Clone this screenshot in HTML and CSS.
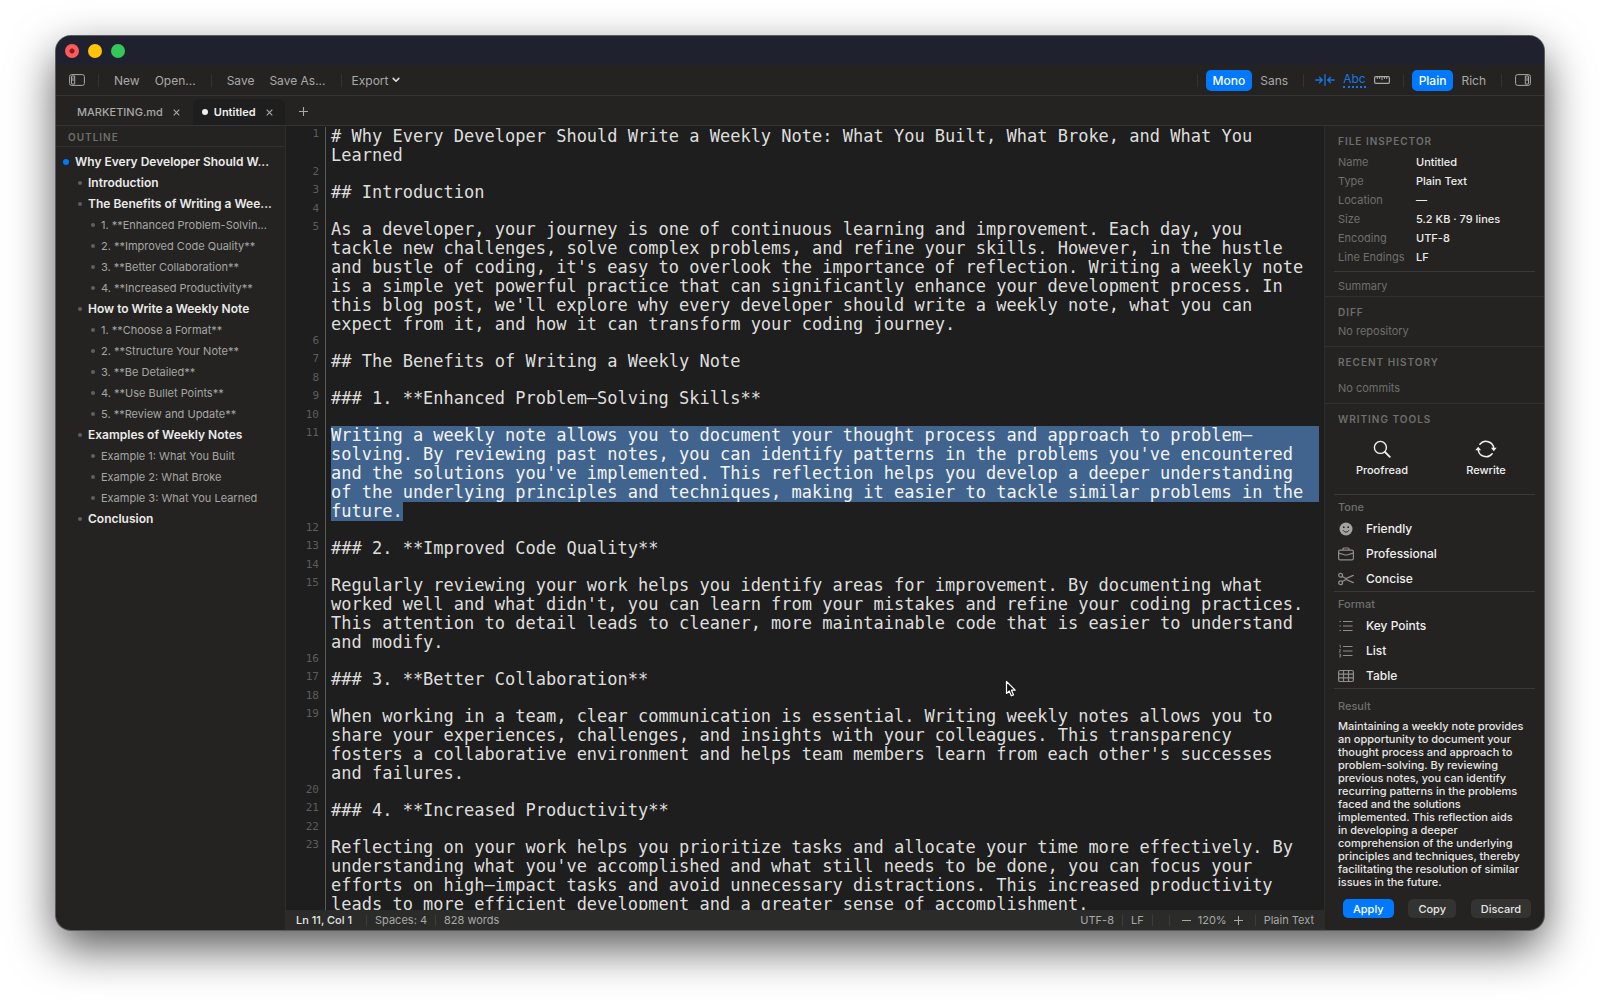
FILE: index.html
```html
<!DOCTYPE html>
<html lang="en">
<head>
<meta charset="utf-8">
<title>Untitled</title>
<link rel="stylesheet" href="styles.css">
</head>
<body>
<div class="window">
  <header class="titlebar">
    <button class="light close" aria-label="Close"></button>
    <button class="light minimize" aria-label="Minimize"></button>
    <button class="light maximize" aria-label="Zoom"></button>
  </header>

  <nav class="toolbar">
    <button class="icon-btn" aria-label="Toggle outline">
      <svg width="16" height="12" viewBox="0 0 16 12" fill="none" stroke="currentColor"><rect x=".6" y=".6" width="14.8" height="10.8" rx="2"/><path d="M5.7 2v8M2.5 2.2v7.600M2.500 2h3.200M2.500 10h3.200M4 3.500v3.500"/></svg>
    </button>
    <span class="sep"></span>
    <button class="tool">New</button>
    <button class="tool">Open...</button>
    <span class="sep"></span>
    <button class="tool">Save</button>
    <button class="tool">Save As...</button>
    <span class="sep"></span>
    <button class="tool export">Export<svg width="8" height="6" viewBox="0 0 8 6" fill="none" stroke="#ddd" stroke-width="1.6" stroke-linecap="round" stroke-linejoin="round"><path d="M1.2 1.4 4 4.2l2.8-2.8"/></svg></button>
    <span class="spacer"></span>
    <span class="sep"></span>
    <div class="segment">
      <button class="seg on">Mono</button>
      <button class="seg">Sans</button>
    </div>
    <span class="sep"></span>
    <div class="toggles">
      <button class="icon-btn blue" aria-label="Wrap lines">
        <svg width="20" height="12" viewBox="0 0 20 12" fill="none" stroke="currentColor" stroke-width="1.3" stroke-linecap="round" stroke-linejoin="round"><path d="M10 .7v10.6M.8 6h6.4M4.5 3.2 7.3 6 4.5 8.8M19.2 6h-6.4M15.5 3.2 12.7 6l2.8 2.8"/></svg>
      </button>
      <button class="abc">Abc</button>
      <button class="icon-btn" aria-label="Ruler">
        <svg width="16" height="8" viewBox="0 0 16 8" fill="none" stroke="currentColor" stroke-width="1.2"><rect x=".6" y=".6" width="14.8" height="6.8" rx="1.3"/><path d="M3.3 1v2M5.6 1v2M8 1v3.2M10.4 1v2M12.7 1v2" stroke-width="1"/></svg>
      </button>
    </div>
    <span class="sep"></span>
    <div class="segment">
      <button class="seg on">Plain</button>
      <button class="seg">Rich</button>
    </div>
    <span class="sep"></span>
    <button class="icon-btn" aria-label="Toggle inspector">
      <svg width="16" height="12" viewBox="0 0 16 12" fill="none" stroke="currentColor"><rect x=".6" y=".6" width="14.8" height="10.8" rx="2"/><path d="M10.3 2v8M13.5 2.2v7.6M10.3 2h3.2M10.3 10h3.2M12 3.5v3.5"/></svg>
    </button>
  </nav>

  <div class="tabs">
    <div class="tab"><span>MARKETING.md</span><button class="x" aria-label="Close MARKETING.md"><svg width="7" height="7" viewBox="0 0 7 7" stroke="currentColor" stroke-width="1.1"><path d="m.7.7 5.6 5.6M6.3.7.7 6.3"/></svg></button></div>
    <div class="tab active"><i class="dirty"></i><span>Untitled</span><button class="x" aria-label="Close Untitled"><svg width="7" height="7" viewBox="0 0 7 7" stroke="currentColor" stroke-width="1.1"><path d="m.7.7 5.6 5.6M6.3.7.7 6.3"/></svg></button></div>
    <button class="add" aria-label="New tab"><svg width="9" height="9" viewBox="0 0 9 9" stroke="currentColor" stroke-width="1.1"><path d="M4.5 0v9M0 4.5h9"/></svg></button>
  </div>

  <div class="body">
    <aside class="outline">
      <h2 class="caption outline-title">OUTLINE</h2>
      <ul class="tree">
        <li class="l1"><span>Why Every Developer Should W...</span></li>
        <li class="l2"><span>Introduction</span></li>
        <li class="l2"><span>The Benefits of Writing a Wee...</span></li>
        <li class="l3"><span>1. **Enhanced Problem-Solvin...</span></li>
        <li class="l3"><span>2. **Improved Code Quality**</span></li>
        <li class="l3"><span>3. **Better Collaboration**</span></li>
        <li class="l3"><span>4. **Increased Productivity**</span></li>
        <li class="l2"><span>How to Write a Weekly Note</span></li>
        <li class="l3"><span>1. **Choose a Format**</span></li>
        <li class="l3"><span>2. **Structure Your Note**</span></li>
        <li class="l3"><span>3. **Be Detailed**</span></li>
        <li class="l3"><span>4. **Use Bullet Points**</span></li>
        <li class="l3"><span>5. **Review and Update**</span></li>
        <li class="l2"><span>Examples of Weekly Notes</span></li>
        <li class="l3"><span>Example 1: What You Built</span></li>
        <li class="l3"><span>Example 2: What Broke</span></li>
        <li class="l3"><span>Example 3: What You Learned</span></li>
        <li class="l2"><span>Conclusion</span></li>
      </ul>
    </aside>

    <main class="editor">
      <div class="code">
        <div class="row"><span class="num">1</span><p># Why Every Developer Should Write a Weekly Note: What You Built, What Broke, and What You Learned</p></div>
        <div class="row blank"><span class="num">2</span><p></p></div>
        <div class="row"><span class="num">3</span><p>## Introduction</p></div>
        <div class="row blank"><span class="num">4</span><p></p></div>
        <div class="row"><span class="num">5</span><p>As a developer, your journey is one of continuous learning and improvement. Each day, you tackle new challenges, solve complex problems, and refine your skills. However, in the hustle and bustle of coding, it's easy to overlook the importance of reflection. Writing a weekly note is a simple yet powerful practice that can significantly enhance your development process. In this blog post, we'll explore why every developer should write a weekly note, what you can expect from it, and how it can transform your coding journey.</p></div>
        <div class="row blank"><span class="num">6</span><p></p></div>
        <div class="row"><span class="num">7</span><p>## The Benefits of Writing a Weekly Note</p></div>
        <div class="row blank"><span class="num">8</span><p></p></div>
        <div class="row"><span class="num">9</span><p>### 1. **Enhanced Problem–Solving Skills**</p></div>
        <div class="row blank"><span class="num">10</span><p></p></div>
        <div class="row selected"><span class="num">11</span><p><mark class="full">Writing a weekly note allows you to document your thought process and approach to problem–solving. By reviewing past notes, you can identify patterns in the problems you've encountered and the solutions you've implemented. This reflection helps you develop a deeper understanding of the underlying principles and techniques, making it easier to tackle similar problems in the</mark> <mark>future.</mark></p></div>
        <div class="row blank"><span class="num">12</span><p></p></div>
        <div class="row"><span class="num">13</span><p>### 2. **Improved Code Quality**</p></div>
        <div class="row blank"><span class="num">14</span><p></p></div>
        <div class="row"><span class="num">15</span><p>Regularly reviewing your work helps you identify areas for improvement. By documenting what worked well and what didn't, you can learn from your mistakes and refine your coding practices. This attention to detail leads to cleaner, more maintainable code that is easier to understand and modify.</p></div>
        <div class="row blank"><span class="num">16</span><p></p></div>
        <div class="row"><span class="num">17</span><p>### 3. **Better Collaboration**</p></div>
        <div class="row blank"><span class="num">18</span><p></p></div>
        <div class="row"><span class="num">19</span><p>When working in a team, clear communication is essential. Writing weekly notes allows you to share your experiences, challenges, and insights with your colleagues. This transparency fosters a collaborative environment and helps team members learn from each other's successes and failures.</p></div>
        <div class="row blank"><span class="num">20</span><p></p></div>
        <div class="row"><span class="num">21</span><p>### 4. **Increased Productivity**</p></div>
        <div class="row blank"><span class="num">22</span><p></p></div>
        <div class="row"><span class="num">23</span><p>Reflecting on your work helps you prioritize tasks and allocate your time more effectively. By understanding what you've accomplished and what still needs to be done, you can focus your efforts on high–impact tasks and avoid unnecessary distractions. This increased productivity leads to more efficient development and a greater sense of accomplishment.</p></div>
      </div>
      <footer class="status">
        <span class="pos">Ln 11, Col 1</span><i class="bar"></i><span>Spaces: 4</span><i class="bar"></i><span>828 words</span>
        <span class="spacer"></span>
        <span>UTF-8</span><i class="bar"></i><span>LF</span><i class="bar"></i><i class="bar"></i>
        <div class="zoom">
          <button aria-label="Zoom out"><svg width="9" height="9" viewBox="0 0 9 9" stroke="currentColor"><path d="M0 4.5h9"/></svg></button>
          <span>120%</span>
          <button aria-label="Zoom in"><svg width="9" height="9" viewBox="0 0 9 9" stroke="currentColor"><path d="M0 4.5h9M4.5 0v9"/></svg></button>
        </div>
        <i class="bar"></i><span>Plain Text</span>
      </footer>
    </main>

    <aside class="inspector">
      <section class="file">
        <h2 class="caption">FILE INSPECTOR</h2>
        <dl>
          <dt>Name</dt><dd>Untitled</dd>
          <dt>Type</dt><dd>Plain Text</dd>
          <dt>Location</dt><dd>—</dd>
          <dt>Size</dt><dd>5.2 KB · 79 lines</dd>
          <dt>Encoding</dt><dd>UTF-8</dd>
          <dt>Line Endings</dt><dd>LF</dd>
        </dl>
      </section>
      <hr>
      <section class="summary"><p class="dim">Summary</p></section>
      <section class="diff">
        <h2 class="caption">DIFF</h2>
        <p class="dim">No repository</p>
      </section>
      <section class="history">
        <h2 class="caption">RECENT HISTORY</h2>
        <p class="dim">No commits</p>
      </section>
      <section class="writing">
        <h2 class="caption">WRITING TOOLS</h2>
        <div class="big">
          <button><svg width="18" height="18" viewBox="0 0 18 18" fill="none" stroke="currentColor" stroke-width="1.4" stroke-linecap="round"><circle cx="7.4" cy="7.4" r="6"/><path d="m12 12 4.8 4.8" stroke-width="1.8"/></svg>Proofread</button>
          <button><svg width="22" height="18" viewBox="0 0 22 18" fill="none" stroke="currentColor" stroke-width="1.5" stroke-linecap="round"><path d="M4.900 4.300a7.800 7.800 0 0 1 13.900 4.200M17.100 13.700A7.800 7.800 0 0 1 3.200 9.500"/><path d="M.3 10.300 3.200 6.800l2.900 3.500zM15.900 7.700l2.900 3.500 2.900-3.500z" fill="currentColor" stroke="none"/></svg>Rewrite</button>
        </div>
      </section>
      <hr>
      <section class="list">
        <h3>Tone</h3>
        <button><svg width="16" height="14" viewBox="0 0 16 14"><circle cx="8" cy="7" r="6.5" fill="#a3a3a2"/><circle cx="5.8" cy="5.2" r=".9" fill="#242321"/><circle cx="10.2" cy="5.2" r=".9" fill="#242321"/><path d="M5 8.2q3 4 6 0" fill="none" stroke="#242321"/></svg>Friendly</button>
        <button><svg width="16" height="14" viewBox="0 0 16 14" fill="none" stroke="currentColor" stroke-width="1.2"><rect x=".6" y="3.2" width="14.8" height="9.6" rx="1.6"/><path d="M5 3V2a1 1 0 0 1 1-1h4a1 1 0 0 1 1 1v1M.8 6.2 7 8h2l6.2-1.8"/></svg>Professional</button>
        <button><svg width="16" height="14" viewBox="0 0 16 14" fill="none" stroke="currentColor" stroke-width="1.3" stroke-linecap="round"><circle cx="2.6" cy="3.3" r="1.900"/><circle cx="2.6" cy="10.7" r="1.900"/><path d="M4.3 4.5 8 6.6l7.3-3.2M4.3 9.5 8 7.4l7.3 3.2"/></svg>Concise</button>
      </section>
      <hr>
      <section class="list">
        <h3>Format</h3>
        <button><svg width="16" height="14" viewBox="0 0 16 14" fill="none" stroke="currentColor"><path d="M5 2.5h9.500M5 7h9.500M5 11.500h9.500M1.500 2.500h1.400M1.500 7h1.400M1.500 11.500h1.400" stroke-width="1.200"/></svg>Key Points</button>
        <button><svg width="16" height="14" viewBox="0 0 16 14" fill="none" stroke="currentColor"><path d="M5 2.500h9.500M5 7h9.500M5 11.500h9.500" stroke-width="1.200"/><path d="M1.500 1.200h.8v2.600M1.200 5.700h1.400l-1.400 2.400h1.600M1.200 10.200h1.500v2.800H1.200M1.500 11.600h1.200" stroke-width=".8"/></svg>List</button>
        <button><svg width="16" height="14" viewBox="0 0 16 14" fill="none" stroke="currentColor" stroke-width="1.200"><rect x=".6" y="1.500" width="14.800" height="11" rx="1.600"/><path d="M.6 5.200h14.800M.6 8.800h14.800M5.500 1.500v11M10.500 1.500v11"/></svg>Table</button>
      </section>
      <hr>
      <section class="result">
        <h3>Result</h3>
        <p>Maintaining a weekly note provides an opportunity to document your thought process and approach to problem-solving. By reviewing previous notes, you can identify recurring patterns in the problems faced and the solutions implemented. This reflection aids in&nbsp;developing a deeper comprehension of the underlying principles and techniques, thereby facilitating the resolution of similar issues in the future.</p>
        <div class="actions">
          <button class="primary">Apply</button>
          <button>Copy</button>
          <button>Discard</button>
        </div>
      </section>
    </aside>
  </div>
</div>
<svg class="cursor" width="12" height="18" viewBox="0 0 12 18"><path d="M1.500 1.500v12l2.800-2.500 2 4.800 2.200-.9-2-4.700h3.700z" fill="#111" stroke="#fff" stroke-width="1.200" stroke-linejoin="round"/></svg>
</body>
</html>
```
FILE: styles.css
```css
* { box-sizing: border-box; }

body {
  margin: 0;
  padding: 36px 56px 70px;
  min-height: 100vh;
  background: #fff;
  font-family: Inter, "Liberation Sans", sans-serif;
  font-size: 12px;
  color: #e6e6e5;
  overflow: hidden;
}

h2, h3, p, ul, dl, dd { margin: 0; padding: 0; font-size: 11px; }
button { font: inherit; color: inherit; background: none; border: 0; padding: 0; margin: 0; }
svg { display: block; flex: none; }

.window {
  height: calc(100vh - 106px);
  display: flex;
  flex-direction: column;
  background: #242321;
  border-radius: 15px;
  overflow: hidden;
  box-shadow: 0 0 0 1px #5a5c5e, 0 18px 46px rgba(0, 0, 0, 0.66);
}

/* title bar */
.titlebar {
  flex: none;
  height: 29px;
  padding-left: 9px;
  display: flex;
  align-items: center;
  gap: 9px;
  background: #1f222e;
}
.light { width: 14px; height: 14px; border-radius: 50%; }
.close { background: radial-gradient(circle, #8c1a1c 0 2px, #fc5b5d 3px); }
.minimize { background: #fdc40a; }
.maximize { background: #34c759; }

/* toolbar */
.toolbar {
  flex: none;
  height: 31px;
  padding: 0 13px;
  display: flex;
  align-items: center;
  border-bottom: 1px solid #343432;
  color: #a9a9a8;
}
.sep { width: 1px; height: 13px; background: #323230; margin: 0 13px; }
.tool { margin: 0 2px; }
.tool + .tool { margin-left: 13px; }
.export { display: flex; align-items: center; gap: 4px; margin-left: -3px; }
.spacer { flex: 1; }
.segment { display: flex; gap: 1px; margin: 0 -5px; }
.seg { height: 21px; padding: 0 7px; border-radius: 5px; }
.seg.on { background: #0079ff; color: #fff; font-weight: 500; }
.toggles { display: flex; align-items: center; gap: 8px; margin-left: -2px; }
.blue { color: #1677e6; }
.abc { color: #1677e6; line-height: 14px; border-bottom: 2px dotted #1677e6; }

/* tabs */
.tabs {
  flex: none;
  height: 30px;
  display: flex;
  align-items: stretch;
  padding: 3px 0 0 8px;
  border-bottom: 1px solid #343432;
  font-size: 11px;
  font-weight: 500;
  color: #a9a9a8;
}
.tab { display: flex; align-items: center; padding: 0 13px; border-radius: 6px 6px 0 0; }
.tab.active { background: #1e1e1e; color: #f0f0f0; font-weight: 600; padding: 0 12px 0 9px; }
.tab .x { color: #a9a9a8; margin-left: 10px; }
.dirty { width: 6px; height: 6px; border-radius: 50%; background: #f0f0f0; margin-right: 6px; }
.add { margin-left: 14px; padding-bottom: 2px; }

/* columns */
.body {
  flex: 1;
  min-height: 0;
  display: grid;
  grid-template-columns: 230px minmax(0, 1fr) 220px;
  grid-template-rows: minmax(0, 1fr);
}

.caption { font-size: 10px; font-weight: 600; letter-spacing: 1px; color: #6f6f6d; line-height: 14px; }

/* outline */
.outline { border-right: 1px solid #2c2c2a; overflow: hidden; }
.outline-title { padding: 4px 12px 2px; border-bottom: 1px solid #30302e; line-height: 14px; }
.tree { list-style: none; padding: 4px 4px 0 7px; }
.tree li { display: flex; align-items: center; height: 21px; gap: 6px; font-size: 11px; color: #a6a6a5; }
.tree li::before { content: ""; flex: none; width: 4px; height: 4px; border-radius: 50%; background: #60605e; }
.tree span { white-space: nowrap; }
.tree .l1, .tree .l2 { font-size: 12px; font-weight: 600; color: #ebebea; }
.tree .l1::before { width: 6px; height: 6px; background: #0079ff; }
.tree .l2 { padding-left: 15px; }
.tree .l3 { padding-left: 28px; }

/* editor */
.editor { display: flex; flex-direction: column; min-width: 0; background: #1e1e1e; }
.code {
  flex: 1;
  min-height: 0;
  overflow: hidden;
  padding-top: 1px;
  font-family: "DejaVu Sans Mono", "Liberation Mono", monospace;
}
.row { display: grid; grid-template-columns: 40px minmax(0, 1fr); }
.num { font-size: 11px; line-height: 13px; text-align: right; padding-right: 6px; color: #5d5d5c; border-right: 1px solid #5a5a59; }
.row p { font-size: 17px; line-height: 19px; min-height: 19px; max-width: calc(95ch + 12px); padding: 0 5px; color: #dededd; }
.row.blank p { min-height: 18px; }
.row.selected p { max-width: none; }
mark { display: inline-block; background: #40648e; color: #f4f4f4; }
mark.full { display: block; }

/* status bar */
.status {
  flex: none;
  height: 20px;
  padding: 0 10px;
  display: flex;
  align-items: center;
  background: #2b2b2a;
  color: #a9a9a8;
  font-size: 11px;
}
.pos { color: #e6e6e5; font-weight: 500; padding-right: 6px; }
.bar { width: 1px; height: 11px; background: #3c3c3b; margin: 0 8px; }
.zoom { display: flex; align-items: center; gap: 7px; padding: 0 4px; }

/* inspector */
.inspector { border-left: 1px solid #2c2c2a; overflow: hidden; font-size: 12px; }
.inspector section { padding: 0 12px 0 13px; }
.inspector hr { margin: 0 9px; border: 0; height: 1px; background: #393937; }
.dim { color: #6f6f6d; line-height: 14px; }
.inspector .file { padding-top: 8px; padding-bottom: 4px; }
dl { display: grid; grid-template-columns: 78px 1fr; line-height: 19px; padding-top: 5px; }
dt { color: #6f6f6d; white-space: nowrap; }
dd { color: #ececeb; font-weight: 500; }
.inspector .summary { padding-top: 7px; padding-bottom: 3px; }
.inspector .diff { border-top: 1px solid #30302e; padding-top: 8px; padding-bottom: 8px; }
.diff .dim { padding-top: 5px; }
.inspector .history { border-top: 1px solid #30302e; padding-top: 8px; padding-bottom: 8px; }
.history .dim { padding-top: 12px; }
.inspector .writing { border-top: 1px solid #30302e; padding-top: 8px; padding-bottom: 17px; }
.big { display: grid; grid-template-columns: 1fr 1fr; padding: 14px 2px 0 0; gap: 16px; }
.big button { display: flex; flex-direction: column; align-items: center; gap: 5px; line-height: 14px; font-weight: 500; font-size: 11px; color: #f0f0f0; }
.list h3, .result h3 { font-size: 11px; font-weight: 500; line-height: 14px; color: #6f6f6d; }
.inspector .list { padding-top: 5px; }
.list h3 { height: 16px; }
.list button { display: flex; align-items: center; gap: 12px; height: 25px; width: 100%; font-weight: 500; color: #f0f0f0; }
.list svg { color: #8d8d8b; }
.inspector .result { padding-top: 10px; }
.result p { line-height: 13px; padding: 7px 7px 0 0; color: #e6e6e5; font-weight: 500; }
.actions { display: flex; justify-content: space-between; padding: 10px 1px 0 5px; }
.actions button { height: 19px; padding: 0 10px; border-radius: 5px; background: #333331; font-size: 11px; font-weight: 500; }
.actions .primary { background: #0079ff; color: #fff; }

/* mouse pointer, floats over the window */
.cursor { position: absolute; left: 1005px; top: 680px; }
```
